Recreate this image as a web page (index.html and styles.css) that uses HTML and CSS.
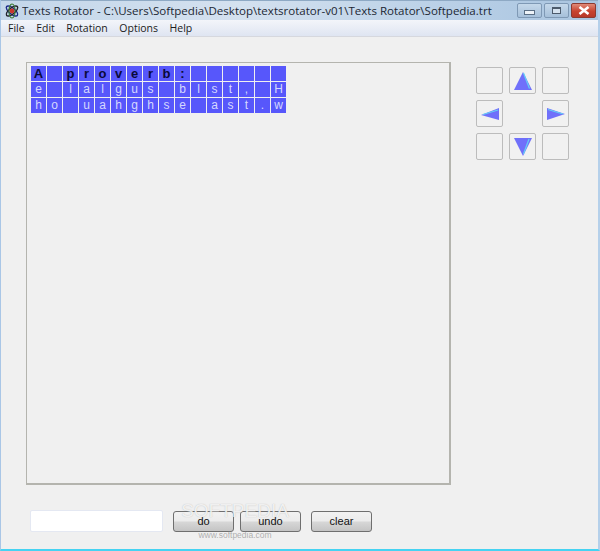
FILE: index.html
```html
<!DOCTYPE html>
<html lang="en">
<head>
  <meta charset="UTF-8" />
  <title>Texts Rotator</title>
  <link rel="stylesheet" href="styles.css">
</head>
<body>
  <div class="window">
    <div class="titlebar">
      <svg class="app-icon" width="16" height="16" viewBox="0 0 16 16">
        <ellipse cx="8" cy="8" rx="7" ry="3" fill="none" stroke="#1d2a8a" stroke-width="1.4" transform="rotate(40 8 8)"/>
        <ellipse cx="8" cy="8" rx="7" ry="3" fill="none" stroke="#23242c" stroke-width="1.4" transform="rotate(-40 8 8)"/>
        <ellipse cx="8" cy="8" rx="3" ry="7" fill="none" stroke="#3b7a35" stroke-width="1.2"/>
        <circle cx="8" cy="8" r="2.4" fill="#c8352d"/>
      </svg>
      <span class="title">Texts Rotator - C:\Users\Softpedia\Desktop\textsrotator-v01\Texts Rotator\Softpedia.trt</span>
      <div class="caption-btns">
        <div class="cap cap-min"><span class="min-glyph"></span></div>
        <div class="cap cap-max"><span class="max-glyph"></span></div>
        <div class="cap cap-close">
          <svg width="12" height="9" viewBox="0 0 12 9"><path d="M1.5 1 L10.5 8 M10.5 1 L1.5 8" stroke="#fff" stroke-width="2.6"/></svg>
        </div>
      </div>
    </div>

    <div class="menubar">
      <span>File</span><span>Edit</span><span>Rotation</span><span>Options</span><span>Help</span>
    </div>

    <div class="content">
      <div class="top-row">
        <div class="panel">
          <div class="grid" id="grid"></div>
        </div>
        <div class="arrows">
          <div class="arrow-btn"></div>
          <div class="arrow-btn">
            <svg width="18" height="18" viewBox="0 0 18 18"><path d="M9 0 L18 18 L0 18 Z" fill="#7070fa"/><path d="M9.5 1 L15.5 16.5" stroke="#62d0f5" stroke-width="1.2"/></svg>
          </div>
          <div class="arrow-btn"></div>
          <div class="arrow-btn">
            <svg width="18" height="12" viewBox="0 0 18 12"><path d="M0 7 L18 0 L18 12 Z" fill="#7070fa"/><path d="M2 6.5 L17 2" stroke="#62d0f5" stroke-width="1.2"/></svg>
          </div>
          <div class="arrow-gap"></div>
          <div class="arrow-btn">
            <svg width="18" height="12" viewBox="0 0 18 12"><path d="M18 6 L0 0 L0 12 Z" fill="#7070fa"/><path d="M1 1.5 L16 6" stroke="#62d0f5" stroke-width="1.2"/></svg>
          </div>
          <div class="arrow-btn"></div>
          <div class="arrow-btn">
            <svg width="18" height="18" viewBox="0 0 18 18"><path d="M9 18 L0 0 L18 0 Z" fill="#7070fa"/><path d="M9.5 16 L15 1" stroke="#62d0f5" stroke-width="1.2"/></svg>
          </div>
          <div class="arrow-btn"></div>
        </div>
      </div>

      <div class="bottom-row">
        <div class="text-input"></div>
        <button class="btn btn-do">do</button>
        <button class="btn btn-undo">undo</button>
        <button class="btn btn-clear">clear</button>
      </div>

      <div class="watermark">
        <div class="wm-big">SOFTPEDIA</div>
        <div class="wm-small">www.softpedia.com</div>
      </div>
    </div>
  </div>

  <script>
    const rows = ['A proverb:      ', 'e lalgus blst, H', 'ho uahghse ast.w'];
    const gridEl = document.getElementById('grid');
    rows.forEach((row, i) => {
      row.split('').forEach(ch => {
        const cell = document.createElement('div');
        cell.className = i === 0 ? 'cell cell-head' : 'cell';
        cell.textContent = ch.trim();
        gridEl.appendChild(cell);
      });
    });
  </script>
</body>
</html>
```

FILE: styles.css
```css
html, body {
  margin: 0;
  padding: 0;
  height: 100%;
}
body {
  background: #f0f0f0;
  font-family: "Liberation Sans", Arial, sans-serif;
  overflow: hidden;
}
.window {
  width: 600px;
  height: 551px;
  box-sizing: border-box;
  display: flex;
  flex-direction: column;
  background: #f0f0f0;
  border-left: 1px solid #a9c6e6;
  border-right: 2px solid #b5d0ea;
  border-bottom: 2px solid #45d3f2;
}
.titlebar {
  height: 19px;
  display: flex;
  align-items: center;
  padding: 0 2px 0 3px;
  background: linear-gradient(to right, #c3d6ea, #d4e1ef 40%, #b9d0e7 75%, #a9c4df);
  border-top: 1px solid #8ea9c4;
}
.app-icon {
  margin-right: 2px;
  flex: none;
}
.title {
  font-family: "Open Sans", "Liberation Sans", sans-serif;
  font-size: 11.55px;
  color: #1c2733;
  white-space: nowrap;
  flex: 1;
  overflow: hidden;
}
.caption-btns {
  display: flex;
  gap: 2px;
  align-self: flex-start;
  margin-top: 2px;
}
.cap {
  width: 23px;
  height: 13px;
  border: 1px solid #7f99b5;
  border-radius: 2px;
  display: flex;
  align-items: center;
  justify-content: center;
  background: linear-gradient(#c5d8ea, #a6c0da);
}
.cap-close {
  border-color: #8c3a30;
  background: linear-gradient(#e08a78, #c8432f 55%, #b8392a);
}
.min-glyph {
  width: 9px;
  height: 3px;
  margin-top: 3px;
  background: #eef3f8;
  border: 1px solid #5b6f85;
}
.max-glyph {
  width: 7px;
  height: 4px;
  border: 1px solid #4c5b6c;
  border-width: 2px 1px 1px;
  background: #d5e2ef;
}
.menubar {
  height: 16px;
  display: flex;
  align-items: center;
  gap: 11.5px;
  padding-left: 7px;
  font-family: "Open Sans", "Liberation Sans", sans-serif;
  font-size: 10.5px;
  color: #1b1b1b;
  background: linear-gradient(#f3f5fa, #dfe5f2);
  border-bottom: 1px solid #d6d8de;
}
.content {
  position: relative;
  flex: 1;
  padding: 25px 0 0 25px;
}
.top-row {
  display: flex;
}
.panel {
  width: 425px;
  height: 423px;
  box-sizing: border-box;
  border: 1px solid #b4b4ae;
  border-right-width: 2px;
  border-bottom-width: 2px;
  padding: 3px 0 0 4px;
  background: #f0f0f0;
}
.grid {
  display: grid;
  grid-template-columns: repeat(16, 15px);
  grid-auto-rows: 15px;
  gap: 1px;
}
.cell {
  background: #5757fb;
  color: #d5d8ff;
  font-size: 12px;
  line-height: 15px;
  text-align: center;
}
.cell-head {
  color: #0a0a3a;
  font-weight: bold;
  font-size: 13px;
}
.arrows {
  display: grid;
  grid-template-columns: repeat(3, 27px);
  grid-auto-rows: 27px;
  gap: 6px;
  margin: 5px 0 0 25px;
  align-self: flex-start;
}
.arrow-btn {
  box-sizing: border-box;
  border: 1px solid #bcbcbc;
  border-radius: 2px;
  background: #f1f1f1;
  display: flex;
  align-items: center;
  justify-content: center;
}
.bottom-row {
  display: flex;
  align-items: center;
  margin: 25px 0 0 4px;
}
.text-input {
  width: 133px;
  height: 22px;
  box-sizing: border-box;
  background: #fff;
  border: 1px solid #e4e8f2;
  border-radius: 2px;
  margin-right: 10px;
}
.btn {
  width: 61px;
  height: 21px;
  padding: 0;
  box-sizing: border-box;
  border: 1px solid #6f6f6f;
  border-radius: 3px;
  background: linear-gradient(#f2f2f2 0, #ececec 45%, #d6d6d6 55%, #c4c4c4 100%);
  font-family: "Liberation Sans", Arial, sans-serif;
  font-size: 11px;
  color: #111;
}
.btn-undo {
  margin-left: 6px;
}
.btn-clear {
  margin-left: 10px;
}
.watermark {
  position: absolute;
  left: 164px;
  top: 466px;
  width: 140px;
  text-align: center;
  pointer-events: none;
}
.wm-big {
  font-size: 19px;
  line-height: 15px;
  color: rgba(255, 255, 255, 0.8);
  text-shadow: 0 0 1px rgba(140, 140, 140, 0.6);
}
.wm-small {
  margin-top: 12px;
  font-size: 8.5px;
  line-height: 11px;
  color: rgba(130, 130, 130, 0.6);
}
```
